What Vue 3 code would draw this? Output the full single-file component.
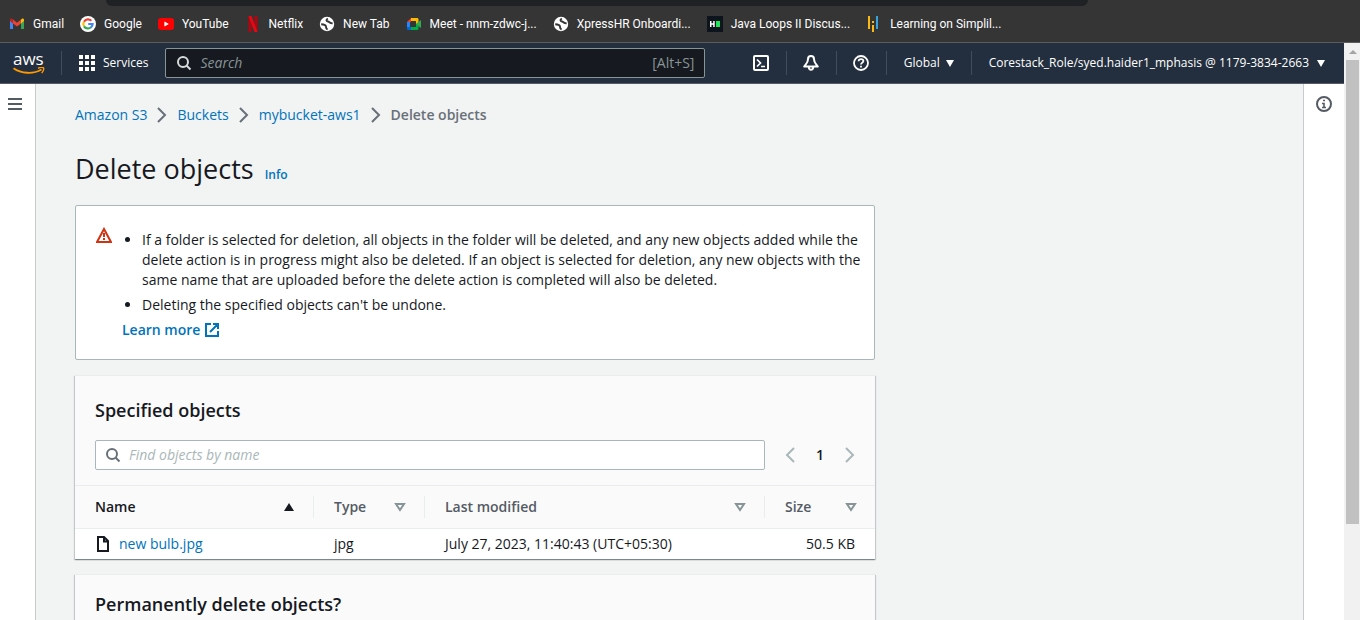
<script setup>
import { ref } from 'vue'

const bookmarks = [
  { icon: 'gmail', label: 'Gmail' },
  { icon: 'google', label: 'Google' },
  { icon: 'youtube', label: 'YouTube' },
  { icon: 'netflix', label: 'Netflix' },
  { icon: 'globe', label: 'New Tab' },
  { icon: 'meet', label: 'Meet - nnm-zdwc-j...' },
  { icon: 'globe', label: 'XpressHR Onboardi...' },
  { icon: 'hacker', label: 'Java Loops II Discus...' },
  { icon: 'simpli', label: 'Learning on Simplil...' },
]
const crumbs = ['Amazon S3', 'Buckets', 'mybucket-aws1']
const columns = [
  { key: 'name', label: 'Name', sorted: true },
  { key: 'type', label: 'Type' },
  { key: 'modified', label: 'Last modified' },
  { key: 'size', label: 'Size' },
]
const objects = [
  { name: 'new bulb.jpg', type: 'jpg', modified: 'July 27, 2023, 11:40:43 (UTC+05:30)', size: '50.5 KB' },
]
const search = ref('')
const filter = ref('')
</script>

<template>
  <div class="window">
    <div class="tabstrip"><div class="omnibox"></div></div>
    <nav class="bookmarks" aria-label="Bookmarks">
      <a v-for="b in bookmarks" :key="b.label" href="#" class="bookmark">
        <svg v-if="b.icon === 'gmail'" viewBox="0 0 16 16">
          <path d="M1 4v9h3V7z" fill="#4285f4" /><path d="M15 4v9h-3V7z" fill="#34a853" />
          <path d="M12 3.600 13 2.800c1-.6 2 0 2 1.200v1L12 7.500z" fill="#fbbc04" />
          <path d="M4 3.600 3 2.800C2 2.200 1 2.800 1 4v1l3 2.500z" fill="#c5221f" />
          <path d="M4 3.600 8 6.700l4-3.100v3.900l-4 3-4-3z" fill="#ea4335" />
        </svg>
        <svg v-else-if="b.icon === 'google'" viewBox="0 0 16 16">
          <circle cx="8" cy="8" r="8" fill="#fff" />
          <g fill="none" stroke-width="2.200">
            <path d="M4 5.700A4.600 4.600 0 0 1 11.300 4.800" stroke="#ea4335" />
            <path d="M4 5.700a4.600 4.600 0 0 0 0 4.600" stroke="#fbbc05" />
            <path d="M4 10.300a4.600 4.600 0 0 0 7 1" stroke="#34a853" />
            <path d="M11 11.300A4.600 4.600 0 0 0 12.600 8H8.200" stroke="#4285f4" />
          </g>
        </svg>
        <svg v-else-if="b.icon === 'youtube'" viewBox="0 0 16 16">
          <rect y="2" width="16" height="12" rx="3" fill="#f00" /><path d="M6.400 5.400v5.200L10.900 8z" fill="#fff" />
        </svg>
        <svg v-else-if="b.icon === 'netflix'" viewBox="0 0 16 16">
          <path d="M3.500 0h3v16h-3zM9.500 0h3v16h-3z" fill="#b1060f" /><path d="M3.500 0h3l6 16h-3z" fill="#e50914" />
        </svg>
        <svg v-else-if="b.icon === 'globe'" viewBox="0 0 16 16">
          <circle cx="8" cy="8" r="7.200" fill="#fff" />
          <path d="M8.800 2.500c-2 1.400-1.500 2.700.2 3 2.200.4 1.700 2.100 4.600 1.800M2.200 8.300c2.600.1 4.600.3 4.700 2.200.1 1.600.4 2.500 1.700 3" fill="none" stroke="#353535" stroke-width="2" />
        </svg>
        <svg v-else-if="b.icon === 'meet'" viewBox="0 0 16 16">
          <path d="M1 6h3v5H1z" fill="#2684fc" /><path d="M1 6 5 2v4z" fill="#ea4335" />
          <path d="M5 2h6c1 0 1.500.5 1.500 1.500V7L10 8.500V5H5z" fill="#ffba00" />
          <path d="M1 11h4v3H2.200C1.400 14 1 13.600 1 12.800z" fill="#0066da" />
          <path d="M5 11h5V8l2.500-2v6.600c0 1-.5 1.400-1.500 1.400H5z" fill="#00ac47" />
          <path d="M10.500 8 14 4.500c.5-.4 1-.2 1 .4v6.300c0 .6-.5.700-1 .3z" fill="#34a853" />
        </svg>
        <svg v-else-if="b.icon === 'hacker'" viewBox="0 0 16 16">
          <path d="M0 0h16v16H0z" fill="#0e141e" />
          <path d="M3 5h1.500v2.200h1.700V5h1.500v6H6.200V8.700H4.500V11H3z" fill="#fff" /><path d="M9 5h4v6H9z" fill="#1ee65b" />
        </svg>
        <svg v-else viewBox="0 0 16 16">
          <path d="M2 0h2v13H2zM6 9h2v7H6zM6 5h2v2H6z" fill="#fdb913" /><path d="M10 0h2v13h-2z" fill="#36a3dc" />
        </svg>
        <span>{{ b.label }}</span>
      </a>
    </nav>

    <div class="viewport">
      <div class="page">
        <header class="topnav">
          <a href="#" class="logo" aria-label="AWS home">
            <span>aws</span>
            <svg viewBox="0 0 32 8"><path d="M0.500 1.200C8 6.600 20 7.500 28.500 2.500" fill="none" stroke="#f90" stroke-width="1.800" /><path d="M25 1.300c2-.9 4.500-1 5.500-.5.400 1-.3 3.600-1.800 5.300" fill="none" stroke="#f90" stroke-width="1.400" /></svg>
          </a>
          <button class="services">
            <svg viewBox="0 0 16 16" fill="#fff"><path d="M0 0h4v4H0zM6 0h4v4H6zM12 0h4v4h-4zM0 6h4v4H0zM6 6h4v4H6zM12 6h4v4h-4zM0 12h4v4H0zM6 12h4v4H6zM12 12h4v4h-4z" /></svg>
            Services
          </button>
          <label class="searchbox">
            <svg viewBox="0 0 16 16" fill="none" stroke="#d5dbdb" stroke-width="2"><circle cx="7" cy="7" r="5" /><path d="m10.500 10.500 4 4" /></svg>
            <input v-model="search" type="text" placeholder="Search" aria-label="Search services" />
            <span>[Alt+S]</span>
          </label>
          <div class="tools">
            <button class="tool" aria-label="CloudShell">
              <svg viewBox="0 0 16 16" fill="none" stroke="#fff" stroke-width="2"><rect x="1" y="1" width="14" height="14" rx="1" /><path d="M4 4.500 7.500 8 4 11.500M8 11.500h4" stroke-width="1.700" /></svg>
            </button>
            <button class="tool" aria-label="Notifications">
              <svg viewBox="0 0 16 16" fill="none" stroke="#fff" stroke-width="2"><path d="M8 1C6 1 5 2.500 5 4.200 5 7.500 3.500 8.500 1.200 11.500h13.600C12.500 8.500 11 7.500 11 4.200 11 2.500 10 1 8 1z" stroke-linejoin="round" /><path d="M5.800 12c.2 3.800 4.200 3.800 4.400 0" /></svg>
            </button>
            <button class="tool" aria-label="Help">
              <svg viewBox="0 0 16 16" fill="none" stroke="#fff" stroke-width="1.800"><circle cx="8" cy="8" r="7" /><path d="M5.600 6.200C5.700 3.300 10.400 3.400 10.400 6.100 10.400 7.600 8 7.700 8 9.600M8 10.700v1.800" /></svg>
            </button>
            <button class="menu">Global <i class="caret"></i></button>
            <button class="menu account">Corestack_Role/syed.haider1_mphasis @ 1179-3834-2663 <i class="caret"></i></button>
          </div>
        </header>

        <div class="body">
          <aside class="rail left">
            <button aria-label="Open navigation"><svg viewBox="0 0 16 16" stroke="#545b64" stroke-width="2"><path d="M1 3h14M1 8h14M1 13h14" /></svg></button>
          </aside>

          <main class="content">
            <nav class="crumbs" aria-label="Breadcrumbs">
              <template v-for="c in crumbs" :key="c">
                <a href="#">{{ c }}</a>
                <svg viewBox="0 0 16 16" fill="none" stroke="#687078" stroke-width="2"><path d="m4 1 7 7-7 7" /></svg>
              </template>
              <b>Delete objects</b>
            </nav>
            <div class="title"><h1>Delete objects</h1><a href="#">Info</a></div>

            <section class="alert">
              <svg class="warn" viewBox="0 0 16 16"><path d="M8 2 15 15H1z" fill="none" stroke="#d13212" stroke-width="2" /><path d="M7 6h2v4H7zM7 11h2v2H7z" fill="#d13212" /></svg>
              <div>
                <ul>
                  <li>If a folder is selected for deletion, all objects in the folder will be deleted, and any new objects added while the delete action is in progress might also be deleted. If an object is selected for deletion, any new objects with the same name that are uploaded before the delete action is completed will also be deleted.</li>
                  <li>Deleting the specified objects can't be undone.</li>
                </ul>
                <a href="#" class="learn">Learn more <svg viewBox="0 0 16 16" fill="none" stroke="#0073bb" stroke-width="2"><path d="M7 2H2v12h12V9M9 2h5v5M14 2 6 10" /></svg></a>
              </div>
            </section>

            <section class="card">
              <div class="card-head">
                <h2>Specified objects</h2>
                <div class="filters">
                  <label class="finder">
                    <svg viewBox="0 0 16 16" fill="none" stroke="#687078" stroke-width="2"><circle cx="7" cy="7" r="5" /><path d="m10.500 10.500 4 4" /></svg>
                    <input v-model="filter" type="text" placeholder="Find objects by name" aria-label="Find objects by name" />
                  </label>
                  <div class="pager">
                    <button aria-label="Previous page"><svg viewBox="0 0 16 16" fill="none" stroke="#aab7b8" stroke-width="2"><path d="m12 1-7 7 7 7" /></svg></button>
                    <button class="current">1</button>
                    <button aria-label="Next page"><svg viewBox="0 0 16 16" fill="none" stroke="#aab7b8" stroke-width="2"><path d="m4 1 7 7-7 7" /></svg></button>
                  </div>
                </div>
              </div>
              <table>
                <thead>
                  <tr>
                    <th v-for="c in columns" :key="c.key" :class="[c.key, { sorted: c.sorted }]">
                      <button>
                        {{ c.label }}
                        <svg v-if="c.sorted" viewBox="0 0 16 16"><path d="M3 12h10L8 4z" fill="#16191f" /></svg>
                        <svg v-else viewBox="0 0 16 16"><path d="M4 5h8l-4 6z" fill="none" stroke="#879596" stroke-width="2" /></svg>
                      </button>
                    </th>
                  </tr>
                </thead>
                <tbody>
                  <tr v-for="o in objects" :key="o.name">
                    <td>
                      <a href="#"><svg viewBox="0 0 16 16" fill="none" stroke="#16191f" stroke-width="2"><path d="M3 1h6l4 4v10H3zM9 1v4.500h4" /></svg>{{ o.name }}</a>
                    </td>
                    <td>{{ o.type }}</td>
                    <td>{{ o.modified }}</td>
                    <td class="num">{{ o.size }}</td>
                  </tr>
                </tbody>
              </table>
            </section>

            <section class="card confirm"><h2>Permanently delete objects?</h2></section>
          </main>

          <aside class="rail right">
            <button aria-label="Open info panel"><svg viewBox="0 0 16 16" fill="none" stroke="#545b64" stroke-width="2"><circle cx="8" cy="8" r="7" /><path d="M7 4.500h2M6 7.500h2V11M6 11.500h4" stroke-width="1.600" /></svg></button>
          </aside>
        </div>
      </div>
      <div class="scrollbar"><i class="up"></i><div class="thumb"></div></div>
    </div>
  </div>
</template>

<style>
body { margin: 0; overflow: hidden; }
</style>

<style scoped>
* { box-sizing: border-box; }
.window { height: 100vh; display: flex; flex-direction: column; overflow: hidden; font: 14px/20px "Open Sans", "Noto Sans", sans-serif; color: #16191f; }
button { border: 0; background: none; padding: 0; margin: 0; font: inherit; color: inherit; cursor: pointer; }
a { color: #0073bb; text-decoration: none; }
svg { width: 16px; height: 16px; flex: none; display: block; }
h1, h2 { margin: 0; }
input { border: 0; background: none; outline: 0; padding: 0; font: inherit; color: inherit; flex: 1; min-width: 0; }
input::placeholder { font-style: italic; opacity: 1; }

.tabstrip { flex: none; height: 6px; padding: 0 272px 0 106px; background: #353535; }
.omnibox { height: 6px; background: #202124; border-radius: 0 0 12px 12px; }
.bookmarks { flex: none; height: 37px; display: flex; gap: 16px; padding: 0 9px; background: #353535; border-bottom: 1px solid #5c5c5c; }
.bookmark { display: flex; align-items: center; gap: 8px; color: #fff; font-family: Roboto, "Open Sans", sans-serif; font-size: 12px; white-space: nowrap; }

.viewport { flex: 1; min-height: 0; display: flex; }
.page { flex: 1; min-width: 0; display: flex; flex-direction: column; }
.scrollbar { width: 16px; background: #f1f1f1; padding: 0 1px 0 2px; display: flex; flex-direction: column; align-items: center; }
.up { margin: 7px 0 6px; border: 4px solid transparent; border-top: 0; border-bottom-color: #a3a3a3; }
.thumb { width: 100%; height: 80.5%; background: #c1c1c1; }

.topnav { flex: none; height: 41px; display: flex; align-items: center; background: #232f3e; border-bottom: 1px solid #545b64; color: #fff; font-size: 12px; font-weight: 500; }
.logo { width: 62px; height: 24px; padding-left: 13px; border-right: 1px solid #414d5c; display: flex; flex-direction: column; color: #fff; font-size: 17px; line-height: 16px; }
.logo svg { width: 32px; height: 8px; }
.services { display: flex; align-items: center; gap: 8px; padding: 0 17px; }
.searchbox { flex: 0 1 540px; height: 30px; display: flex; align-items: center; gap: 8px; padding: 0 10px; border: 1px solid #879596; border-radius: 2px; background: #16191f; color: #879596; font-size: 14px; font-weight: 400; }
.searchbox input::placeholder { color: #879596; }
.tools { margin-left: auto; display: flex; align-items: center; }
.tool { height: 24px; padding: 0 17px 0 16px; border-right: 1px solid #414d5c; }
.menu { height: 24px; display: flex; align-items: center; gap: 6px; padding: 0 17px; white-space: nowrap; }
.menu + .menu { border-left: 1px solid #414d5c; }
.account { padding-right: 19px; gap: 8px; }
.caret { border: 4px solid transparent; border-bottom: 0; border-top: 7px solid #fff; }

.body { flex: 1; min-height: 0; display: flex; background: #f2f3f3; }
.rail { background: #fff; padding-top: 12px; display: flex; flex-direction: column; align-items: center; }
.left { width: 36px; padding-right: 5px; border-right: 1px solid #c6cbcc; }
.right { width: 41px; border-left: 1px solid #c6cbcc; }
.content { flex: 1; min-width: 0; overflow: hidden; padding: 21px 39px 0; }
.content > * { max-width: 800px; }

.crumbs { display: flex; align-items: center; gap: 7px; }
.crumbs b { color: #687078; font-weight: 600; }
.title { display: flex; align-items: baseline; gap: 11px; margin: 26px 0 18px; }
.title h1 { font-size: 27px; line-height: 36px; font-weight: 400; }
.title a { font-size: 12px; font-weight: 600; }
.alert { display: flex; gap: 10px; padding: 24px 10px 19px 20px; background: #fff; border: 1px solid #aab7b8; border-radius: 2px; }
.warn { margin-top: -3px; }
.alert ul { margin: 0; padding-left: 20px; }
.alert li { margin-bottom: 5px; }
.learn { display: flex; align-items: center; gap: 4px; font-weight: 600; }

.card { margin-top: 15px; background: #fafafa; border-top: 1px solid #eaeded; box-shadow: 0 1px 1px #001c244d, 1px 1px 1px #001c2426, -1px 1px 1px #001c2426; }
.card h2 { font-size: 18px; line-height: 24px; font-weight: 600; }
.card-head { padding: 22px 20px 15px; border-bottom: 1px solid #eaeded; }
.filters { display: flex; align-items: center; gap: 16px; margin-top: 18px; }
.finder { flex: 1; height: 30px; display: flex; align-items: center; gap: 8px; padding: 0 10px 0 9px; background: #fff; border: 1px solid #aab7b8; border-radius: 2px; }
.finder input::placeholder { color: #aab7b8; }
.pager { display: flex; margin-right: -4px; }
.pager button { width: 18px; display: flex; align-items: center; justify-content: center; }
.pager .current { width: 42px; font-weight: 600; }
table { width: 100%; table-layout: fixed; border-collapse: collapse; background: #fff; }
th { height: 42px; padding: 0; background: #fafafa; border-bottom: 1px solid #eaeded; color: #545b64; }
th button { width: 100%; height: 22px; display: flex; align-items: center; justify-content: space-between; padding: 0 16px 0 20px; border-right: 1px solid #eaeded; font-weight: 600; }
th.sorted { color: #16191f; }
th.name { width: 239px; }
th.type { width: 111px; }
th.size { width: 110px; }
th.size button { border-right: 0; }
td { height: 31px; padding: 0 20px; }
td a { display: flex; align-items: center; gap: 8px; }
.num { text-align: right; }
.confirm { padding: 17px 20px; }
</style>
